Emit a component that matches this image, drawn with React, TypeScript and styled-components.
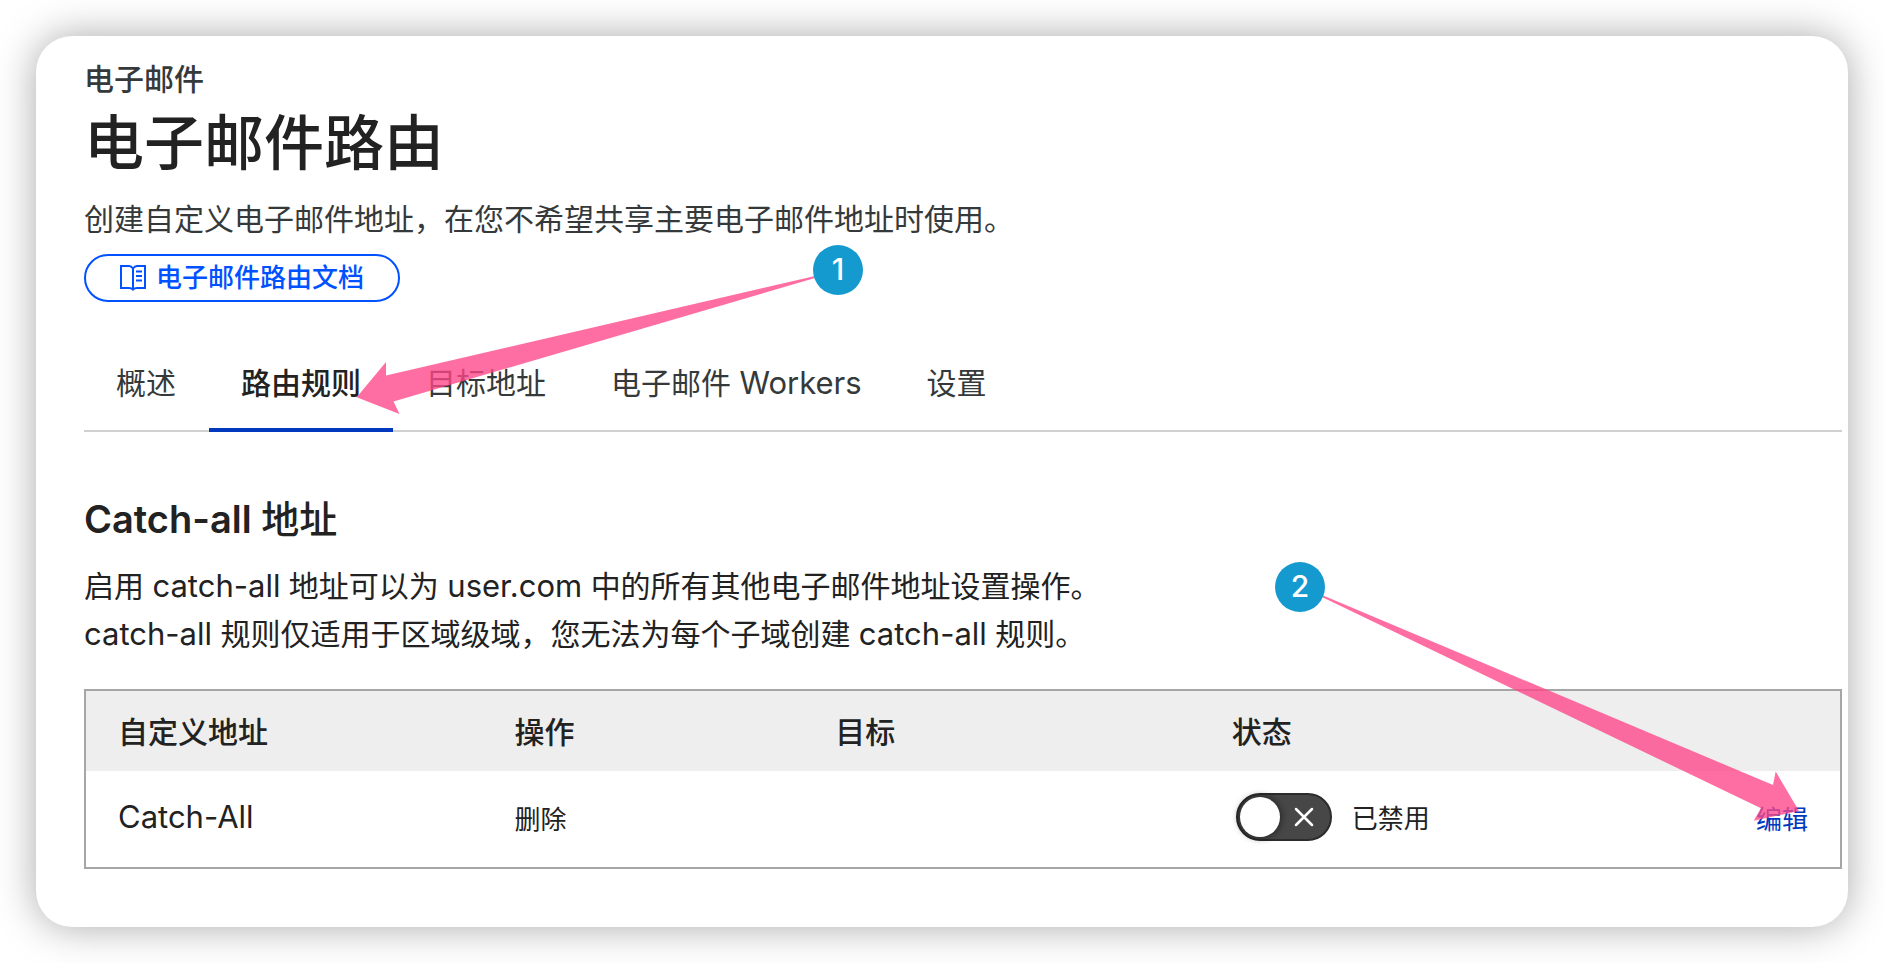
import React, { useState } from "react";
import styled, { createGlobalStyle } from "styled-components";

const GlobalStyle = createGlobalStyle`
  *, *::before, *::after { box-sizing: border-box; }
  body {
    margin: 0;
    background: #ffffff;
    color: #222222;
    font-family: Inter, "Noto Sans CJK SC", sans-serif;
    font-size: 30px;
    line-height: 48px;
  }
  h1, h2, p { margin: 0; }
`;

const Card = styled.main`
  position: relative;
  margin: 36px;
  padding: 23px 6px 58px 48px;
  border-radius: 36px;
  background: #ffffff;
  box-shadow: 0 0 40px rgba(0, 0, 0, 0.34);
`;

const Eyebrow = styled.p`
  color: #36393a;
  font-weight: 500;
  line-height: 40px;
`;

const Title = styled.h1`
  margin-top: 2px;
  font-size: 60px;
  font-weight: 500;
  line-height: 84px;
`;

const Lead = styled.p`
  margin-top: 10px;
  color: #36393a;
`;

const DocsLink = styled.a`
  display: inline-flex;
  align-items: center;
  gap: 10px;
  height: 48px;
  margin-top: 11px;
  padding: 0 34px;
  border: 2px solid #0051ff;
  border-radius: 24px;
  color: #0051ff;
  font-size: 26px;
  font-weight: 500;
  text-decoration: none;
`;

const TabBar = styled.nav`
  display: flex;
  gap: 1px;
  margin-top: 32px;
  border-bottom: 2px solid #d0d0d0;
`;

const Tab = styled.button<{ $active?: boolean }>`
  margin: 0 0 -2px;
  padding: 23px 32px 21px;
  border: 0;
  border-bottom: 4px solid ${(p) => (p.$active ? "#0039bd" : "transparent")};
  background: none;
  color: ${(p) => (p.$active ? "#222222" : "#36393a")};
  font: inherit;
  font-weight: ${(p) => (p.$active ? 500 : 400)};
  cursor: pointer;
`;

const Latin = styled.span`
  font-size: 31px;
  line-height: 1;
`;

const SectionTitle = styled.h2`
  margin-top: 63px;
  font-size: 38px;
  font-weight: 600;
`;

const HanText = styled.span`
  font-weight: 500;
`;

const SectionText = styled.p`
  margin-top: 19px;
`;

const RuleTable = styled.table`
  width: 100%;
  margin-top: 31px;
  border: 2px solid #a6a6a6;
  border-spacing: 0;
  table-layout: fixed;
`;

const Col = styled.col<{ $share?: number }>`
  width: ${(p) => (p.$share ? `${p.$share}%` : "auto")};
`;

const HeadCell = styled.th`
  padding: 17px 32px 15px;
  background: #eeeeee;
  font-weight: 500;
  text-align: left;
`;

const Cell = styled.td`
  height: 96px;
  padding: 0 32px 4px;
`;

const SmallCell = styled(Cell)<{ $end?: boolean }>`
  padding: 1px 32px 0;
  font-size: 26px;
  text-align: ${(p) => (p.$end ? "right" : "left")};
`;

const StatusCell = styled(Cell)`
  font-size: 26px;
`;

const StatusLabel = styled.label`
  display: flex;
  align-items: center;
  gap: 20px;
  padding-left: 4px;
`;

const StatusText = styled.span`
  padding-top: 3px;
`;

const Switch = styled.span`
  position: relative;
  display: inline-flex;
  align-items: center;
  justify-content: space-between;
  width: 96px;
  height: 48px;
  padding: 0 16px 0 2px;
  border: 2px solid #2c2c2c;
  border-radius: 24px;
  background: #474747;
`;

const SwitchInput = styled.input`
  position: absolute;
  inset: 0;
  width: 100%;
  height: 100%;
  margin: 0;
  opacity: 0;
  cursor: pointer;
`;

const Knob = styled.span`
  width: 40px;
  height: 40px;
  border-radius: 50%;
  background: #ffffff;
  box-shadow: 0 0 6px 2px rgba(0, 0, 0, 0.4);
`;

const EditLink = styled.a`
  color: #0039bd;
  text-decoration: none;
`;

const Pointer = styled.svg<{ $side: "left" | "right"; $offset: number; $top: number }>`
  position: absolute;
  top: ${(p) => p.$top}px;
  ${(p) => p.$side}: ${(p) => p.$offset}px;
  fill: #ff4688;
  opacity: 0.78;
  pointer-events: none;
`;

const StepBadge = styled.span<{ $side: "left" | "right"; $offset: number; $top: number }>`
  position: absolute;
  top: ${(p) => p.$top}px;
  ${(p) => p.$side}: ${(p) => p.$offset}px;
  width: 50px;
  height: 50px;
  border-radius: 50%;
  background: #159ad0;
  color: #ffffff;
  font-weight: 500;
  text-align: center;
`;

const BookIcon = () => (
  <svg width="26" height="26" viewBox="0 0 26 26" fill="none" stroke="currentColor" strokeWidth="2" aria-hidden="true">
    <path d="M13 3.5C11.8 1.8 10.5 1 9 1H1v22h8c2 0 3 .5 4 1.5 1-1 2-1.500 4-1.500h8V1h-8c-1.500 0-2.800.8-4 2.500zM13 3.500v21" />
    <path d="M16 6.500h6M16 11h6M16 15.500h6" />
  </svg>
);

const CrossIcon = () => (
  <svg width="20" height="20" viewBox="0 0 20 20" fill="none" stroke="#ffffff" strokeWidth="2.500" strokeLinecap="round" aria-hidden="true">
    <path d="M2 2l16 16M18 2L2 18" />
  </svg>
);

const tabs = [
  { id: "overview", label: "概述" },
  { id: "rules", label: "路由规则" },
  { id: "targets", label: "目标地址" },
  { id: "workers", label: <>电子邮件 <Latin>Workers</Latin></> },
  { id: "settings", label: "设置" },
];

export default function App() {
  const [active, setActive] = useState("rules");

  return (
    <>
      <GlobalStyle />
      <Card>
        <Eyebrow>电子邮件</Eyebrow>
        <Title>电子邮件路由</Title>
        <Lead>创建自定义电子邮件地址，在您不希望共享主要电子邮件地址时使用。</Lead>
        <DocsLink href="#docs">
          <BookIcon />
          电子邮件路由文档
        </DocsLink>

        <TabBar>
          {tabs.map(({ id, label }) => (
            <Tab key={id} type="button" $active={id === active} onClick={() => setActive(id)}>
              {label}
            </Tab>
          ))}
        </TabBar>

        <SectionTitle>
          Catch-all <HanText>地址</HanText>
        </SectionTitle>
        <SectionText>
          启用 <Latin>catch-all</Latin> 地址可以为 <Latin>user.com</Latin> 中的所有其他电子邮件地址设置操作。
          <br />
          <Latin>catch-all</Latin> 规则仅适用于区域级域，您无法为每个子域创建 <Latin>catch-all</Latin> 规则。
        </SectionText>

        <RuleTable>
          <colgroup>
            <Col $share={22.6} />
            <Col $share={18.3} />
            <Col $share={22.6} />
            <Col />
            <Col $share={10} />
          </colgroup>
          <thead>
            <tr>
              <HeadCell scope="col">自定义地址</HeadCell>
              <HeadCell scope="col">操作</HeadCell>
              <HeadCell scope="col">目标</HeadCell>
              <HeadCell scope="col" colSpan={2}>状态</HeadCell>
            </tr>
          </thead>
          <tbody>
            <tr>
              <Cell>
                <Latin>Catch-All</Latin>
              </Cell>
              <SmallCell>删除</SmallCell>
              <Cell />
              <StatusCell>
                <StatusLabel>
                  <Switch>
                    <Knob />
                    <CrossIcon />
                    <SwitchInput type="checkbox" role="switch" />
                  </Switch>
                  <StatusText>已禁用</StatusText>
                </StatusLabel>
              </StatusCell>
              <SmallCell $end>
                <EditLink href="#edit">编辑</EditLink>
              </SmallCell>
            </tr>
          </tbody>
        </RuleTable>

        <Pointer $side="left" $offset={314} $top={234} width="470" height="150" viewBox="0 0 470 150" aria-hidden="true">
          <path d="M6.700 127.300L36 92V105.500L465 6V8L43.500 131.500L49.500 144Z" />
        </Pointer>
        <StepBadge $side="left" $offset={777} $top={209}>1</StepBadge>

        <Pointer $side="right" $offset={38} $top={553} width="500" height="240" viewBox="0 0 500 240" aria-hidden="true">
          <path d="M12 6L463 196L465.700 182.500L489 222L443.700 231.700L451 219.300L13 8.500Z" />
        </Pointer>
        <StepBadge $side="right" $offset={523} $top={526}>2</StepBadge>
      </Card>
    </>
  );
}
